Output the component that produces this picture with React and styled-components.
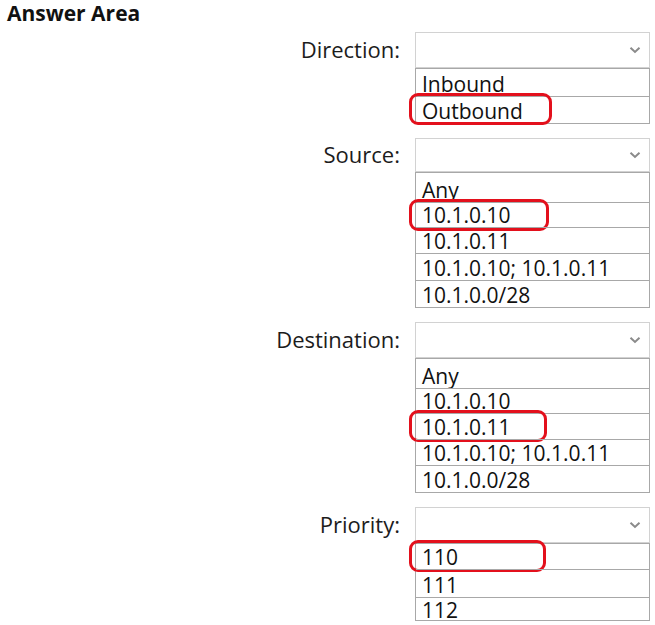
import React from 'react';
import styled, { createGlobalStyle } from 'styled-components';

const GlobalStyle = createGlobalStyle`
  body {
    margin: 0;
    background: #ffffff;
    font-family: "Open Sans", "Noto Sans", sans-serif;
    color: #1a1a1a;
  }
`;

const Page = styled.div`
  width: 655px;
  height: 625px;
  padding: 0 0 0 7px;
  box-sizing: border-box;
  overflow: hidden;
`;

const Title = styled.h1`
  margin: 0;
  height: 32px;
  font-size: 21px;
  font-weight: 700;
  line-height: 26px;
  color: #111;
`;

const Groups = styled.div`
  display: flex;
  flex-direction: column;
  gap: 14px;
`;

const Group = styled.div`
  display: grid;
  grid-template-columns: 393px 235px;
  column-gap: 15px;
  align-items: start;
`;

const Label = styled.div`
  height: ${p => p.$h}px;
  display: flex;
  align-items: center;
  justify-content: flex-end;
  font-size: 22px;
  color: #1c1c1c;
  padding-bottom: 3px;
  box-sizing: border-box;
`;

const Field = styled.div`
  display: flex;
  flex-direction: column;
`;

const Select = styled.div`
  height: ${p => p.$h}px;
  border: 1px solid #d2d2d2;
  box-sizing: border-box;
  display: flex;
  align-items: center;
  justify-content: flex-end;
  padding-right: 8px;
`;

const Options = styled.div`
  border: 1px solid #a8a8a8;
  border-top: none;
`;

const Option = styled.div`
  position: relative;
  box-sizing: border-box;
  height: ${p => p.$h}px;
  border-top: 1px solid #a8a8a8;
  padding-left: 6px;
  padding-top: ${p => Math.max(0, p.$h - 25)}px;
  font-size: 21px;
  line-height: 24px;
  color: #111;
  white-space: nowrap;
`;

const Highlight = styled.span`
  position: absolute;
  left: -7px;
  top: -4px;
  width: ${p => p.$w}px;
  height: 32px;
  border: 3px solid #e3101c;
  border-radius: 9px;
  box-sizing: border-box;
`;

const Chevron = () => (
  <svg width="12" height="8" viewBox="0 0 12 8">
    <path d="M1.5 1.8 L6 6 L10.5 1.8" fill="none" stroke="#8a8a8a" strokeWidth="2" />
  </svg>
);

const groups = [
  { label: 'Direction:', sh: 36, options: ['Inbound', 'Outbound'], pick: 1, w: 143, h: [28, 27] },
  {
    label: 'Source:',
    sh: 34,
    options: ['Any', '10.1.0.10', '10.1.0.11', '10.1.0.10; 10.1.0.11', '10.1.0.0/28'],
    pick: 1,
    w: 140,
    h: [30, 25, 26, 27, 27],
  },
  {
    label: 'Destination:',
    sh: 36,
    options: ['Any', '10.1.0.10', '10.1.0.11', '10.1.0.10; 10.1.0.11', '10.1.0.0/28'],
    pick: 2,
    w: 138,
    h: [30, 25, 26, 26, 27],
  },
  { label: 'Priority:', sh: 36, options: ['110', '111', '112'], pick: 0, w: 137, h: [26, 28, 23] },
];

export default function App() {
  return (
    <Page>
      <GlobalStyle />
      <Title>Answer Area</Title>
      <Groups>
        {groups.map(g => (
          <Group key={g.label}>
            <Label $h={g.sh}>{g.label}</Label>
            <Field>
              <Select $h={g.sh}>
                <Chevron />
              </Select>
              <Options>
                {g.options.map((o, i) => (
                  <Option key={o} $h={g.h[i]}>
                    {o}
                    {i === g.pick && <Highlight $w={g.w} />}
                  </Option>
                ))}
              </Options>
            </Field>
          </Group>
        ))}
      </Groups>
    </Page>
  );
}
